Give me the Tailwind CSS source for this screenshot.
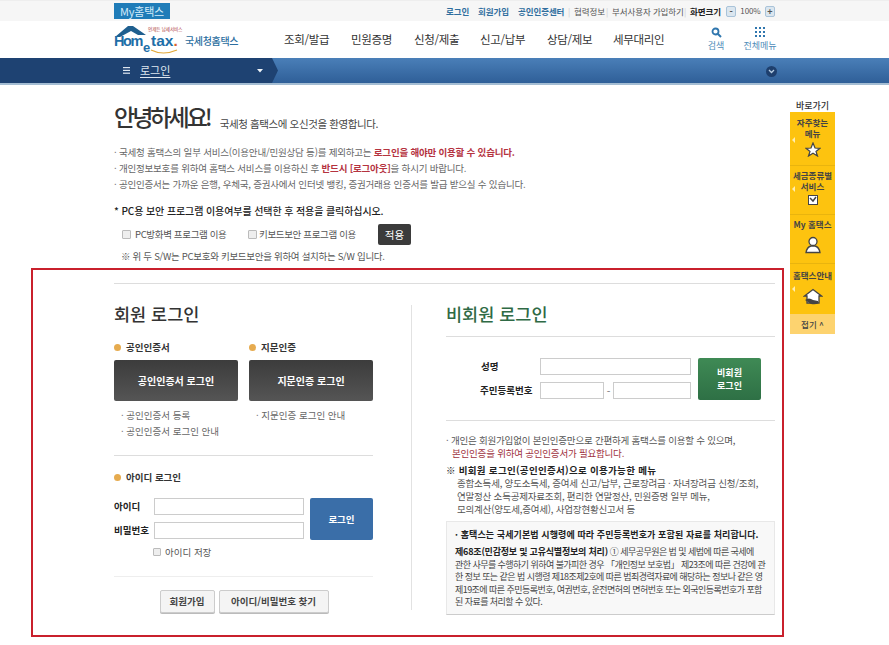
<!DOCTYPE html>
<html lang="ko"><head><meta charset="utf-8"><title>Hometax</title>
<script src="https://cdn.jsdelivr.net/npm/@tailwindcss/browser@4"></script></head>
<body class="relative m-0 h-[645px] w-[889px] overflow-hidden bg-white font-['Noto_Sans_CJK_KR','Noto_Sans',sans-serif] text-[10.5px] text-[#555]">
<!-- top bar -->
<div class="flex h-[21px] items-center border-t border-[#eee] bg-[#f6f6f6] pl-[114px] pr-[114px]">
  <div class="flex h-[16px] w-[56px] items-center justify-center bg-[#1f7cb8] text-[11px] tracking-[-0.2px] text-[#d5ecfa]">My홈택스</div>
  <div class="ml-auto flex items-center whitespace-nowrap text-[8.5px] leading-none tracking-[-0.1px]">
    <span class="w-[32px] font-bold text-[#2f6e9e]">로그인</span><span class="w-[40px] font-bold text-[#2f6e9e]">회원가입</span><span class="w-[50px] font-bold text-[#2f6e9e]">공인인증센터</span><span class="w-[6px] text-[#ccc]">|</span><span class="w-[32px] text-[#555]">협력정보</span><span class="w-[6px] text-[#ccc]">|</span><span class="w-[72px] text-[#555]">부서사용자 가입하기</span><span class="w-[6px] text-[#ccc]">|</span><span class="w-[36px] font-bold text-[#222]">화면크기</span>
    <span class="flex w-[49px] items-center text-[#555]"><span class="flex h-[11px] w-[11px] items-center justify-center rounded-[2px] border border-[#a9c3d9] bg-[#dbe6ef] text-[9px] font-bold">-</span><span class="mx-[4px] text-[8px]">100%</span><span class="flex h-[11px] w-[11px] items-center justify-center rounded-[2px] border border-[#a9c3d9] bg-[#dbe6ef] text-[9px] font-bold">+</span></span>
  </div>
</div>
<!-- header -->
<div class="relative flex h-[37px] items-center bg-white pl-[113px]">
  <div class="relative h-[37px] w-[126px] shrink-0 whitespace-nowrap">
    <svg class="absolute left-[1px] top-[4px]" width="34" height="13" viewBox="0 0 34 13"><path d="M1 12 L14 1 H19 L32 10 H24 L17 6 L6 12 Z" fill="#1f5f8f"/></svg>
    <span class="absolute left-[1px] top-[13px] font-['Liberation_Sans'] text-[14.5px] font-bold leading-none tracking-[-1.4px] text-[#1f6fa8]">Hom</span>
    <span class="absolute left-[30px] top-[20px] font-['Liberation_Sans'] text-[13px] font-bold leading-none text-[#1f6fa8]">e</span>
    <span class="absolute left-[38px] top-[12px] font-['Liberation_Sans'] text-[15.5px] font-bold leading-none text-[#1f6fa8]">tax<b class="text-[#d9632a]">.</b></span>
    <span class="absolute left-[35px] top-[6px] text-[4.5px] leading-none text-[#a33]">언제든 납세서비스</span>
    <span class="absolute left-[72px] top-[15px] text-[10px] font-medium leading-none tracking-[-0.35px] text-[#2c6ea0]">국세청홈택스</span>
    <svg class="absolute left-[37px] top-[28px]" width="28" height="6" viewBox="0 0 28 6"><path d="M1 1 Q13 7 27 1" stroke="#e2a83a" stroke-width="1.2" fill="none"/></svg>
  </div>
  <nav class="ml-[45px] flex gap-[21px] whitespace-nowrap text-[11.5px] tracking-[-0.3px] text-[#333]">
    <span class="w-[46px]">조회/발급</span><span class="w-[42px]">민원증명</span><span class="w-[45px]">신청/제출</span><span class="w-[46px]">신고/납부</span><span class="w-[45px]">상담/제보</span><span class="w-[52px]">세무대리인</span>
  </nav>
  <div class="absolute left-[706px] top-[6px] flex w-[20px] flex-col items-center">
    <svg width="11" height="11" viewBox="0 0 11 11"><circle cx="4.5" cy="4.5" r="3" stroke="#2f76ae" stroke-width="1.8" fill="none"/><path d="M7 7 L10 10" stroke="#2f76ae" stroke-width="2"/></svg>
    <span class="mt-[2px] text-[9px] leading-[12px] text-[#4f8cb9]">검색</span>
  </div>
  <div class="absolute left-[742px] top-[6px] flex w-[36px] flex-col items-center">
    <svg width="10" height="10" viewBox="0 0 10 10" fill="#2f76ae"><rect x="0" y="0" width="2" height="2"/><rect x="4" y="0" width="2" height="2"/><rect x="8" y="0" width="2" height="2"/><rect x="0" y="4" width="2" height="2"/><rect x="4" y="4" width="2" height="2"/><rect x="8" y="4" width="2" height="2"/><rect x="0" y="8" width="2" height="2"/><rect x="4" y="8" width="2" height="2"/><rect x="8" y="8" width="2" height="2"/></svg>
    <span class="mt-[3px] whitespace-nowrap text-[9px] leading-[12px] text-[#4f8cb9]">전체메뉴</span>
  </div>
</div>
<!-- blue band -->
<div class="relative flex h-[27px] items-center border-b-2 border-[#a4bdd3] bg-gradient-to-b from-[#4a7fb8] to-[#2f5f98]">
  <div class="relative flex h-[25px] w-[272px] items-center bg-[#1e4272] pl-[123px] text-white">
    <svg width="8" height="7" viewBox="0 0 8 7" fill="#dfe7f0"><rect width="7" height="1.2" y="0"/><rect width="7" height="1.2" y="2.8"/><rect width="7" height="1.2" y="5.6"/></svg>
    <span class="ml-[9px] text-[11px] text-[#dfe7f0] underline underline-offset-2">로그인</span>
    <svg class="absolute left-[257px] top-[11px]" width="6" height="4" viewBox="0 0 6 4"><path d="M0 0 H6 L3 3.5 Z" fill="#eef3f8"/></svg>
    <svg class="absolute left-[272px] top-0" width="7" height="25" viewBox="0 0 7 25"><path d="M0 0 L6 12.5 L0 25 Z" fill="#1e4272"/></svg>
  </div>
  <div class="absolute left-[766px] top-[8px] flex h-[11px] w-[11px] items-center justify-center rounded-full bg-[#1e3f6d]"><svg width="7" height="5" viewBox="0 0 7 5"><path d="M1 1 L3.5 3.5 L6 1" stroke="#b8cde2" stroke-width="1.3" fill="none"/></svg></div>
</div>
<!-- page body -->
<div class="flex pl-[114px]">
  <main class="w-[661px] shrink-0">
    <div class="flex h-[47px] items-end">
      <h1 class="text-[23px] font-medium leading-[32px] tracking-[-3px] text-[#333]">안녕하세요!</h1>
      <span class="ml-[10px] text-[10.5px] leading-[16px] tracking-[-0.4px] text-[#444]">국세청 홈택스에 오신것을 환영합니다.</span>
    </div>
    <ul class="mt-[12px] whitespace-nowrap text-[9.5px] leading-[16px] tracking-[-0.2px] text-[#666]">
      <li>· 국세청 홈택스의 일부 서비스(이용안내/민원상담 등)를 제외하고는 <b class="font-bold text-[#b5333f]">로그인을 해야만 이용할 수 있습니다.</b></li>
      <li>· 개인정보보호를 위하여 홈택스 서비스를 이용하신 후 <b class="font-bold text-[#b5333f]">반드시 [로그아웃]</b>을 하시기 바랍니다.</li>
      <li>· 공인인증서는 가까운 은행, 우체국, 증권사에서 인터넷 뱅킹, 증권거래용 인증서를 발급 받으실 수 있습니다.</li>
    </ul>
    <p class="mt-[11px] text-[10px] font-medium leading-[16px] tracking-[-0.1px] text-[#222]">* PC용 보안 프로그램 이용여부를 선택한 후 적용을 클릭하십시오.</p>
    <div class="mt-[5px] flex h-[21px] items-center whitespace-nowrap pl-[8px] text-[9.5px] tracking-[-0.35px] text-[#555]">
      <span class="h-[9px] w-[9px] rounded-[1px] border border-[#bbb] bg-[#eee]"></span><span class="ml-[4px] w-[100px]">PC방화벽 프로그램 이용</span>
      <span class="ml-[13px] h-[9px] w-[9px] rounded-[1px] border border-[#bbb] bg-[#eee]"></span><span class="ml-[2px] w-[98px]">키보드보안 프로그램 이용</span>
      <span class="ml-[21px] flex h-[21px] w-[33px] items-center justify-center rounded-[2px] bg-[#3b3b3b] text-[10.5px] tracking-normal text-white">적용</span>
    </div>
    <p class="mt-[3px] whitespace-nowrap pl-[7px] text-[9.5px] leading-[16px] tracking-[-0.3px] text-[#555]">※ 위 두 S/W는 PC보호와 키보드보안을 위하여 설치하는 S/W 입니다.</p>
    <div class="mt-[19px] border-t border-[#ddd]"></div>
    <div class="mt-[21px] flex">
      <!-- member -->
      <section class="w-[259px] shrink-0">
        <h2 class="h-[18px] text-[17.5px] font-medium leading-[18px] text-[#333]">회원 로그인</h2>
        <div class="mt-[17px] flex gap-[11px]">
          <div class="w-[124px]">
            <div class="flex h-[14px] items-center text-[9.5px] font-bold text-[#333]"><span class="mr-[5px] h-[7px] w-[7px] rounded-full bg-[#e6ab4f]"></span>공인인증서</div>
            <button class="mt-[6px] flex h-[41px] w-[124px] items-center justify-center rounded-[2px] bg-gradient-to-b from-[#3c3c3c] to-[#555] text-[10px] font-bold text-white">공인인증서 로그인</button>
            <div class="mt-[6px] pl-[7px] text-[9.5px] leading-[16px] text-[#666]">· 공인인증서 등록<br>· 공인인증서 로그인 안내</div>
          </div>
          <div class="w-[124px]">
            <div class="flex h-[14px] items-center text-[9.5px] font-bold text-[#333]"><span class="mr-[5px] h-[7px] w-[7px] rounded-full bg-[#e6ab4f]"></span>지문인증</div>
            <button class="mt-[6px] flex h-[41px] w-[124px] items-center justify-center rounded-[2px] bg-gradient-to-b from-[#3c3c3c] to-[#555] text-[10px] font-bold text-white">지문인증 로그인</button>
            <div class="mt-[6px] pl-[7px] text-[9.5px] leading-[16px] text-[#666]">· 지문인증 로그인 안내</div>
          </div>
        </div>
        <div class="mt-[16px] border-t border-[#ddd]"></div>
        <div class="mt-[14px] flex h-[14px] items-center text-[9.5px] font-bold text-[#333]"><span class="mr-[5px] h-[7px] w-[7px] rounded-full bg-[#e6ab4f]"></span>아이디 로그인</div>
        <div class="mt-[14px] flex">
          <div class="w-[40px] text-[9.5px] font-bold text-[#222]"><div class="h-[24px] leading-[17px]">아이디</div><div class="whitespace-nowrap leading-[17px]">비밀번호</div></div>
          <div class="w-[150px]"><div class="h-[17px] border border-[#ccc]"></div><div class="mt-[7px] h-[17px] border border-[#ccc]"></div></div>
          <button class="ml-[6px] flex h-[42px] w-[63px] items-center justify-center rounded-[2px] bg-[#3a6ea8] text-[9.5px] font-bold text-white">로그인</button>
        </div>
        <div class="mt-[6px] flex h-[12px] items-center pl-[39px] text-[9.5px] text-[#555]"><span class="mr-[4px] h-[8px] w-[8px] rounded-[1px] border border-[#bbb] bg-[#eee]"></span>아이디 저장</div>
        <div class="mt-[18px] border-t border-[#eee]"></div>
        <div class="mt-[13px] flex justify-center gap-[4px] pl-[1px] text-[9.5px] font-bold text-[#444]">
          <button class="h-[23px] w-[55px] rounded-[2px] border border-[#ccc] bg-[#f4f4f4] shadow-[0_1px_0_#bbb]">회원가입</button>
          <button class="h-[23px] w-[110px] rounded-[2px] border border-[#ccc] bg-[#f4f4f4] shadow-[0_1px_0_#bbb]">아이디/비밀번호 찾기</button>
        </div>
      </section>
      <div class="ml-[38px] h-[305px] w-px shrink-0 bg-[#e2e2e2]"></div>
      <!-- guest -->
      <section class="ml-[34px] w-[329px]">
        <h2 class="h-[18px] text-[17.5px] font-medium leading-[18px] text-[#2f6a45]">비회원 로그인</h2>
        <div class="mt-[13px] border-t border-[#ddd]"></div>
        <div class="mt-[21px] flex pl-[34px]">
          <div class="w-[60px] text-[9.5px] font-bold text-[#222]"><div class="h-[24px] pl-[1px] leading-[17px]">성명</div><div class="whitespace-nowrap leading-[17px]">주민등록번호</div></div>
          <div class="w-[151px]"><div class="h-[17px] border border-[#ccc]"></div><div class="mt-[7px] flex h-[17px] items-center"><span class="h-[17px] w-[64px] border border-[#ccc]"></span><span class="w-[9px] text-center text-[#777]">-</span><span class="h-[17px] w-[78px] border border-[#ccc]"></span></div></div>
          <button class="ml-[7px] flex h-[42px] w-[63px] items-center justify-center rounded-[2px] bg-gradient-to-b from-[#3f8a55] to-[#2e7045] text-[9px] font-bold leading-[13px] text-white">비회원<br>로그인</button>
        </div>
        <div class="mt-[20px] border-t border-[#ddd]"></div>
        <div class="mt-[13px] whitespace-nowrap text-[9.5px] leading-[12.5px] tracking-[-0.2px] text-[#555]">· 개인은 회원가입없이 본인인증만으로 간편하게 홈택스를 이용할 수 있으며,<br><span class="pl-[6px] text-[#a03240]">본인인증을 위하여 공인인증서가 필요합니다.</span></div>
        <div class="mt-[5px] whitespace-nowrap text-[9.5px] leading-[13px] tracking-[-0.2px] text-[#555]"><b class="font-bold tracking-[0.3px] text-[#222]">※ 비회원 로그인(공인인증서)으로 이용가능한 메뉴</b><div class="pl-[11px]">종합소득세, 양도소득세, 증여세 신고/납부, 근로장려금 · 자녀장려금 신청/조회,<br>연말정산 소득공제자료조회, 편리한 연말정산, 민원증명 일부 메뉴,<br>모의계산(양도세,증여세), 사업장현황신고서 등</div></div>
        <div class="mt-[5px] h-[94px] whitespace-nowrap border border-[#e8e8e8] border-b-[#ccc] bg-[#f8f8f8] px-[8px] pt-[6px] text-[9px] tracking-[-0.55px] text-[#444]">
          <p class="font-bold leading-[13px] tracking-[0.1px] text-[#222]">· 홈택스는 국세기본법 시행령에 따라 주민등록번호가 포함된 자료를 처리합니다.</p>
          <p class="mt-[5px] leading-[12.5px]"><b class="font-bold tracking-[-0.2px] text-[#222]">제68조(민감정보 및 고유식별정보의 처리)</b> ① 세무공무원은 법 및 세법에 따른 국세에<br>관한 사무를 수행하기 위하여 불가피한 경우 「개인정보 보호법」 제23조에 따른 건강에 관<br>한 정보 또는 같은 법 시행령 제18조제2호에 따른 범죄경력자료에 해당하는 정보나 같은 영<br>제19조에 따른 주민등록번호, 여권번호, 운전면허의 면허번호 또는 외국인등록번호가 포함<br>된 자료를 처리할 수 있다.</p>
        </div>
      </section>
    </div>
  </main>
  <!-- quick menu -->
  <aside class="ml-[15px] mt-[15px] w-[45px] shrink-0">
    <div class="h-[12px] whitespace-nowrap text-center text-[9px] font-medium leading-[12px] text-[#333]">바로가기</div>
    <div class="bg-[#fdc30f] text-center text-[8.5px] font-bold leading-[11px] text-[#444]">
      <div class="relative flex h-[53px] flex-col items-center pt-[5px]"><span class="absolute left-[2px] top-[25px] border-y-[3px] border-r-[3px] border-y-transparent border-r-[#ffeeb0]"></span>자주찾는<br>메뉴<svg class="mt-[3px]" width="16" height="15" viewBox="0 0 16 15"><path d="M8 1 L10 6 L15 6.3 L11 9.5 L12.5 14 L8 11.3 L3.5 14 L5 9.5 L1 6.3 L6 6 Z" fill="#fff" stroke="#444" stroke-width="1.2"/></svg></div>
      <div class="relative flex h-[49px] flex-col items-center border-t border-[#e9b40e] pt-[4px]"><span class="absolute left-[2px] top-[20px] border-y-[3px] border-r-[3px] border-y-transparent border-r-[#ffeeb0]"></span>세금종류별<br>서비스<svg class="mt-[3px]" width="10" height="10" viewBox="0 0 10 10"><rect x="0.5" y="0.5" width="9" height="9" fill="#fff" stroke="#444"/><path d="M2 3 L5 6 L8 2" stroke="#444" stroke-width="1.5" fill="none"/></svg></div>
      <div class="flex h-[49px] flex-col items-center border-t border-[#e9b40e] pt-[4px]">My 홈택스<svg class="mt-[6px]" width="16" height="18" viewBox="0 0 16 18"><circle cx="8" cy="5.5" r="4" fill="#fff" stroke="#444" stroke-width="1.3"/><path d="M1 16.5 Q2 11 6 10 H10 Q14 11 15 16.5 Z" fill="#fff" stroke="#444" stroke-width="1.3"/></svg></div>
      <div class="relative flex h-[51px] flex-col items-center border-t border-[#e9b40e] pt-[6px]"><span class="absolute left-[2px] top-[22px] border-y-[3px] border-r-[3px] border-y-transparent border-r-[#ffeeb0]"></span>홈택스안내<svg class="mt-[7px]" width="20" height="18" viewBox="0 0 20 18"><path d="M1.5 8 L10 1.5 L18.5 8 L16 8 V15 H4 V8 Z" fill="#fff" stroke="#444" stroke-width="1.3"/><path d="M2 12 Q6 9 10 12 L15 13 Q17 17 8 16 Z" fill="#444"/></svg></div>
      <div class="flex h-[20px] items-center justify-center bg-[#fdd36f] font-medium text-[#444]">접기 ^</div>
    </div>
  </aside>
</div>
<!-- red annotation over the page -->
<div class="pointer-events-none absolute left-[31px] top-[268px] h-[369px] w-[753px] border-[2px] border-[#c9202c]"></div>
</body></html>
